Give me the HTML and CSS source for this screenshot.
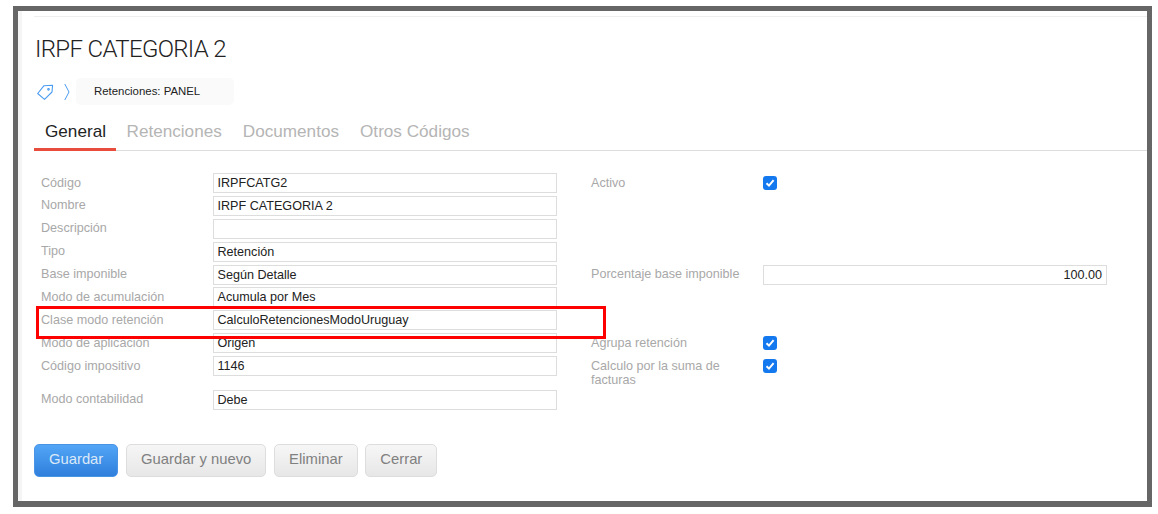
FILE: index.html
```html
<!DOCTYPE html>
<html lang="es">
<head>
<meta charset="utf-8">
<title>IRPF CATEGORIA 2</title>
<link rel="stylesheet" href="styles.css">
</head>
<body>
<main class="frame">
  <div class="page">
    <h1 class="title">IRPF CATEGORIA 2</h1>
    <nav class="crumbs">
      <svg class="tag" width="17" height="16" viewBox="0 0 17 16" fill="none" stroke="#4a9cf0" stroke-width="1.1" stroke-linejoin="round"><path d="M0.7 9.5 7 1.7 15.6 1.2 15 8 7.5 15.3Z"/><circle cx="11.5" cy="5.3" r="0.8"/></svg>
      <svg class="chev" width="6" height="18" viewBox="0 0 6 18" fill="none" stroke="#4a9cf0" stroke-width="1"><path d="M0.8 1 5 9 0.8 17"/></svg>
      <span class="chip">Retenciones: PANEL</span>
    </nav>
    <div class="tabs">
      <span class="tab active">General</span>
      <span class="tab">Retenciones</span>
      <span class="tab">Documentos</span>
      <span class="tab">Otros Códigos</span>
    </div>
    <form class="form">
      <label class="lbl">Código</label><div class="inp">IRPFCATG2</div>
      <label class="lbl">Activo</label><div class="cell"><span class="check"><svg width="10" height="10" viewBox="0 0 10 10" fill="none" stroke="#fff" stroke-width="2"><path d="M1.5 5.2 4 7.6 8.6 2.2"/></svg></span></div>

      <label class="lbl">Nombre</label><div class="inp">IRPF CATEGORIA 2</div>
      <span></span><span></span>

      <label class="lbl">Descripción</label><div class="inp"></div>
      <span></span><span></span>

      <label class="lbl">Tipo</label><div class="inp">Retención</div>
      <span></span><span></span>

      <label class="lbl">Base imponible</label><div class="inp">Según Detalle</div>
      <label class="lbl">Porcentaje base imponible</label><div class="inp num">100.00</div>

      <label class="lbl">Modo de acumulación</label><div class="inp">Acumula por Mes</div>
      <span></span><span></span>

      <label class="lbl">Clase modo retención</label><div class="inp">CalculoRetencionesModoUruguay</div>
      <span></span><span></span>

      <label class="lbl">Modo de aplicación</label><div class="inp">Origen</div>
      <label class="lbl">Agrupa retención</label><div class="cell"><span class="check"><svg width="10" height="10" viewBox="0 0 10 10" fill="none" stroke="#fff" stroke-width="2"><path d="M1.5 5.2 4 7.6 8.6 2.2"/></svg></span></div>

      <label class="lbl">Código impositivo</label><div class="inp">1146</div>
      <label class="lbl wrap">Calculo por la suma de facturas</label><div class="cell"><span class="check"><svg width="10" height="10" viewBox="0 0 10 10" fill="none" stroke="#fff" stroke-width="2"><path d="M1.5 5.2 4 7.6 8.6 2.2"/></svg></span></div>

      <label class="lbl">Modo contabilidad</label><div class="inp">Debe</div>
      <span></span><span></span>

      <div class="highlight"></div>
    </form>
    <div class="actions">
      <button type="button" class="btn primary">Guardar</button>
      <button type="button" class="btn">Guardar y nuevo</button>
      <button type="button" class="btn">Eliminar</button>
      <button type="button" class="btn">Cerrar</button>
    </div>
  </div>
</main>
</body>
</html>
```
FILE: styles.css
```css
* { box-sizing: border-box; }
html, body { margin: 0; height: 514px; overflow: hidden; background: #fff; }
body { padding: 6px 6px 0 13px; font-family: "Liberation Sans", Arial, sans-serif; }

.frame {
  width: 1139px;
  height: 501px;
  border: 5px solid #666;
  border-bottom-width: 6px;
  background: #fff;
  box-shadow: inset 4px 0 0 #f5f5f5;
  padding-left: 16px;
}
.page { border-top: 1px solid #eee; margin-top: 5px; height: 484px; }

.title {
  margin: 0;
  padding: 18px 0 0 1px;
  font: 300 24px/28px Roboto, sans-serif;
  letter-spacing: -0.66px;
  color: #222;
}
.crumbs { display: flex; align-items: center; margin-top: 15px; height: 27px; padding-left: 3px; }
.tag { margin-right: 10px; }
.chev { margin-right: 6px; }
.chip {
  width: 158px; height: 27px;
  background: #fafafa;
  border-radius: 5px;
  padding-left: 18px;
  font-size: 11.4px;
  line-height: 27px;
  color: #222;
}
.tabs {
  display: flex;
  margin-top: 8px;
  height: 38px;
  border-bottom: 1px solid #ddd;
}
.tab {
  padding: 8px 10.5px 0;
  font-size: 17.15px;
  line-height: 20px;
  color: #b5b5b5;
  height: 38px;
}
.tab.active { color: #222; border-bottom: 3px solid #e74c3c; width: 82px; padding-left: 11px; }

.form {
  position: relative;
  display: grid;
  grid-template-columns: 172px 378px 172px 344px;
  row-gap: 2.9px;
  grid-auto-rows: minmax(20px, auto);
  margin-top: 22px;
  padding-left: 7px;
}
.lbl { font-size: 12.6px; line-height: 14px; padding-top: 2.5px; color: #a8a8a8; }
.inp {
  width: 344px;
  height: 20px;
  border: 1px solid #ddd;
  background: #fff;
  padding: 0 4px 0 3.5px;
  font-size: 12.6px;
  line-height: 18px;
  color: #222;
}
.num { text-align: right; }
.cell { height: 20px; display: flex; align-items: center; }
.check {
  width: 14px; height: 14px;
  border-radius: 3px;
  background: #1478ee;
  display: flex; align-items: center; justify-content: center;
}
.wrap { padding-right: 20px; }
.highlight {
  position: absolute;
  left: 2px; top: 132.5px;
  width: 570px; height: 33.5px;
  border: 3px solid #f00;
}

.actions { display: flex; gap: 7.8px; margin-top: 34px; }
.btn {
  height: 33px;
  padding: 0 14px 3px;
  border: 1px solid #ddd;
  border-radius: 5px;
  background: linear-gradient(#f6f6f6, #e7e7e7);
  font: 14.8px "Liberation Sans", Arial, sans-serif;
  color: #808080;
}
.btn.primary {
  background: linear-gradient(#52a5f6, #2f7fdc);
  border-color: #4a94e6;
  color: #dbe9f8;
}
```
